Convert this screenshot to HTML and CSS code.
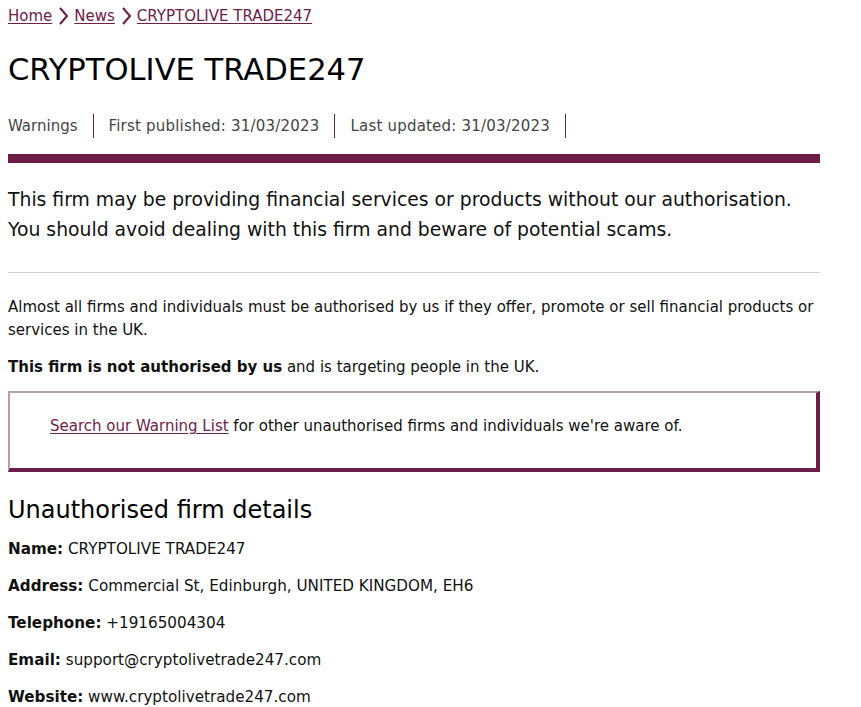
FILE: index.html
```html
<!DOCTYPE html>
<html lang="en">
<head>
<meta charset="utf-8">
<title>CRYPTOLIVE TRADE247</title>
<link rel="stylesheet" href="styles.css">
</head>
<body>
<main class="page">
  <nav class="crumbs">
    <a href="#">Home</a>
    <svg class="chev" viewBox="0 0 10 18" width="10" height="18"><path d="M2 1 L9 9 L2 17" fill="none" stroke="#6d2048" stroke-width="2"/></svg>
    <a href="#">News</a>
    <svg class="chev" viewBox="0 0 10 18" width="10" height="18"><path d="M2 1 L9 9 L2 17" fill="none" stroke="#6d2048" stroke-width="2"/></svg>
    <a href="#">CRYPTOLIVE TRADE247</a>
  </nav>
  <h1 class="title">CRYPTOLIVE TRADE247</h1>
  <ul class="meta">
    <li>Warnings</li>
    <li>First published: 31/03/2023</li>
    <li>Last updated: 31/03/2023</li>
  </ul>
  <div class="bar"></div>
  <p class="lead">This firm may be providing financial services or products without our authorisation. You should avoid dealing with this firm and beware of potential scams.</p>
  <hr class="rule">
  <p class="text">Almost all firms and individuals must be authorised by us if they offer, promote or sell financial products or services in the UK.</p>
  <p class="text"><strong>This firm is not authorised by us</strong> and is targeting people in the UK.</p>
  <div class="callout">
    <p><a href="#">Search our Warning List</a> for other unauthorised firms and individuals we're aware of.</p>
  </div>
  <h2 class="subtitle">Unauthorised firm details</h2>
  <p class="detail"><strong>Name:</strong> CRYPTOLIVE TRADE247</p>
  <p class="detail"><strong>Address:</strong> Commercial St, Edinburgh, UNITED KINGDOM, EH6</p>
  <p class="detail"><strong>Telephone:</strong> +19165004304</p>
  <p class="detail"><strong>Email:</strong> support@cryptolivetrade247.com</p>
  <p class="detail"><strong>Website:</strong> www.cryptolivetrade247.com</p>
</main>
</body>
</html>
```
FILE: styles.css
```css
html, body {
  margin: 0;
  padding: 0;
  background: #fff;
}
body {
  font-family: "DejaVu Sans", Verdana, sans-serif;
  color: #111;
}
.page {
  width: 812px;
  padding: 0 8px;
}
a {
  color: #6d2048;
  text-decoration: underline;
  text-underline-offset: 2px;
}
.crumbs {
  display: flex;
  align-items: center;
  gap: 6px;
  font-size: 15px;
  height: 32px;
  margin: 0;
}
.chev {
  display: block;
}
.title {
  font-size: 30.6px;
  font-weight: normal;
  margin: 18px 0 0;
  line-height: 40px;
  color: #000;
}
.meta {
  list-style: none;
  display: flex;
  margin: 24px 0 0;
  padding: 0;
  font-size: 15px;
  color: #444;
}
.meta li {
  border-right: 1px solid #6d2048;
  padding: 0 15px;
  line-height: 24px;
  letter-spacing: 0.2px;
}
.meta li:first-child {
  padding-left: 0;
  letter-spacing: 0;
}
.bar {
  height: 9px;
  background: #6b1d47;
  margin-top: 16px;
}
.lead {
  font-size: 18.8px;
  line-height: 30px;
  margin: 22px 0 0;
  color: #111;
}
.rule {
  border: 0;
  border-top: 1px solid #d0d0d0;
  margin: 27px 0 0;
}
.text {
  font-size: 15px;
  line-height: 23px;
  margin: 23px 0 0;
}
.text + .text {
  margin-top: 14px;
}
.callout {
  margin-top: 12px;
  border-left: 2px solid #bb9aad;
  border-top: 2px solid #bb9aad;
  border-right: 4px solid #6b1d47;
  border-bottom: 4px solid #6b1d47;
  padding: 21px 40px 30px;
}
.callout p {
  margin: 0;
  font-size: 15px;
  line-height: 24px;
}
.subtitle {
  font-size: 24px;
  font-weight: normal;
  margin: 23px 0 0;
  line-height: 30px;
  color: #000;
}
.detail {
  font-size: 15.2px;
  line-height: 22px;
  margin: 15px 0 0;
}
.subtitle + .detail {
  margin-top: 13px;
}
.detail strong {
  font-weight: bold;
}
```
